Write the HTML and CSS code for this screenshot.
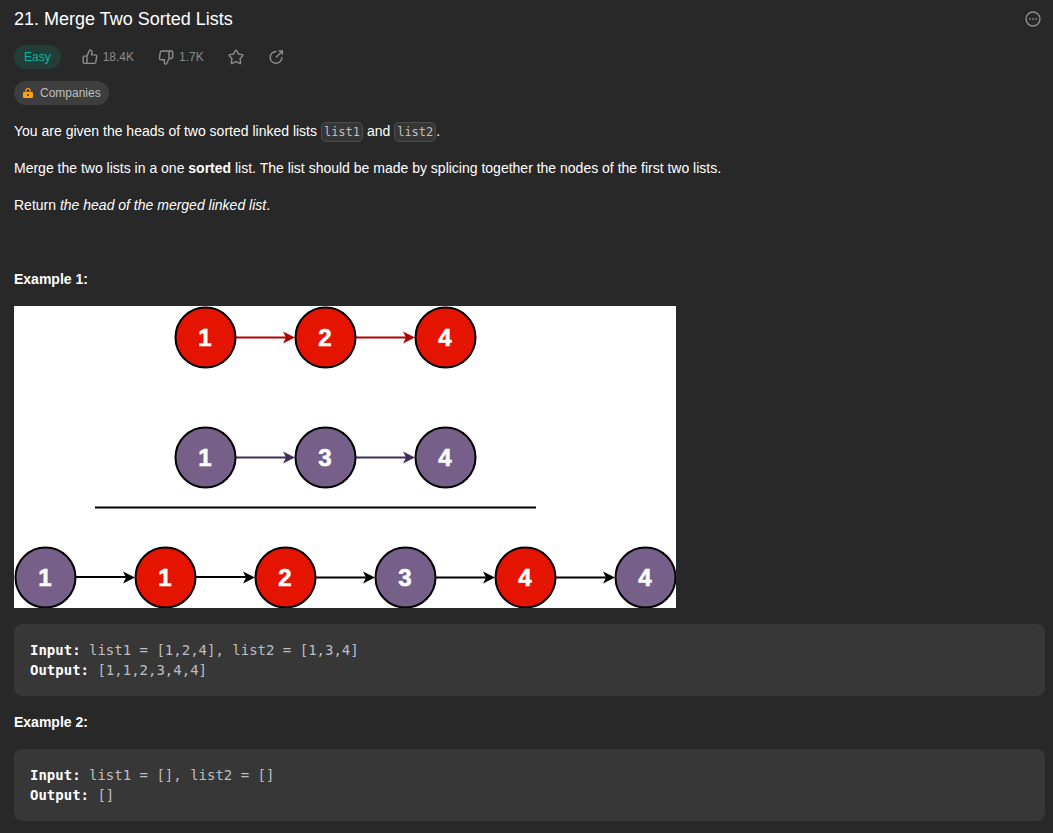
FILE: index.html
```html
<!DOCTYPE html>
<html lang="en">
<head>
<meta charset="utf-8">
<title>Merge Two Sorted Lists</title>
<link rel="stylesheet" href="styles.css">
</head>
<body>
<main class="problem">
  <header class="header">
    <h1 class="title">21. Merge Two Sorted Lists</h1>
    <button class="icon-button" type="button" aria-label="More options">
      <svg class="icon" viewBox="0 0 18 18"><circle cx="9" cy="9" r="7.800"/><path d="M4.500 9h1.800M8.100 9h1.800M11.700 9h1.800"/></svg>
    </button>
  </header>

  <div class="meta">
    <span class="pill pill-easy">Easy</span>
    <div class="actions">
      <button class="icon-button" type="button" aria-label="Like">
        <svg class="icon" viewBox="0 0 18 18"><path d="M5.6 8 8.2 1.9Q8.6 .8 9.8 1.2Q11.4 1.8 11.2 3.6L10.7 6.6H14.6Q16.8 6.6 16.5 8.8L15.5 14.8Q15.2 16.2 13.9 16.2H5.6ZM5.6 8H2.8Q1.3 8 1.3 9.5V14.7Q1.3 16.2 2.8 16.2H5.6"/></svg>
        <span>18.4K</span>
      </button>
      <button class="icon-button" type="button" aria-label="Dislike">
        <svg class="icon" viewBox="0 0 18 18"><path d="M12.4 10.6 9.8 16.3Q9.4 17.3 8.2 16.900Q6.900 16.300 7 14.800L7.300 12H3.600Q1.400 12 1.700 9.800L2.600 3.700Q2.900 2.200 4.300 2.200H12.400ZM12.400 10.600H15Q16.500 10.600 16.500 9.100V3.700Q16.500 2.200 15 2.200H12.400"/></svg>
        <span>1.7K</span>
      </button>
      <button class="icon-button" type="button" aria-label="Add to favorites">
        <svg class="icon" viewBox="0 0 18 18"><path d="M8.100 2Q9 .5 9.900 2L11.800 5.700 15.800 6.300Q17.500 6.700 16.300 8L13.600 10.800 14.200 15Q14.400 16.800 12.800 16L9 14.200 5.200 16Q3.600 16.800 3.800 15L4.400 10.800 1.700 8Q.5 6.700 2.200 6.300L6.200 5.700Z"/></svg>
      </button>
      <button class="icon-button" type="button" aria-label="Share">
        <svg class="icon" viewBox="0 0 18 18"><path d="M9.500 2.900H9A6.600 6.600 0 1 0 15.600 9.500V9M8.900 9.500 16 2.400M12 2.200H16.200V6.400"/></svg>
      </button>
    </div>
  </div>

  <div class="topics">
    <button class="pill pill-companies" type="button">
      <svg class="lock" viewBox="0 0 12 12"><path class="lock-shackle" d="M3.900 5.400V3.600a2.100 2.100 0 0 1 4.200 0V5.400"/><path class="lock-body" fill-rule="evenodd" d="M2.200 5H9.800Q11 5 11 6.200V9.800Q11 11 9.800 11H2.200Q1 11 1 9.800V6.200Q1 5 2.200 5ZM6 7a1 1 0 1 0 0 2 1 1 0 0 0 0-2Z"/></svg>
      <span>Companies</span>
    </button>
  </div>

  <article class="description">
    <p>You are given the heads of two sorted linked lists <code>list1</code> and <code>list2</code>.</p>
    <p>Merge the two lists in a one <strong>sorted</strong> list. The list should be made by splicing together the nodes of the first two lists.</p>
    <p>Return <em>the head of the merged linked list</em>.</p>
    <p>&nbsp;</p>
    <p><strong>Example 1:</strong></p>
    <svg class="diagram" viewBox="0 0 662 302" role="img" aria-label="Two sorted lists merged into one">
      <defs>
        <path id="head" d="M0 0-12-6-9 0-12 6Z"/>
      </defs>
      <rect width="662" height="302" fill="#fff"/>
      <g class="arrow arrow-red">
        <path d="M221 31.500H274M341 31.500H394"/>
        <use href="#head" x="281" y="31.500"/><use href="#head" x="401" y="31.500"/>
      </g>
      <g class="arrow arrow-purple">
        <path d="M221 151.500H274M341 151.500H394"/>
        <use href="#head" x="281" y="151.500"/><use href="#head" x="401" y="151.500"/>
      </g>
      <path class="divider" d="M81 201.500H522"/>
      <g class="arrow arrow-black">
        <path d="M61 271H114M181 271H234" stroke-width="2.200"/>
        <path d="M301 271.500H354M421 271.500H474M541 271.500H594"/>
        <use href="#head" x="121" y="271.500"/><use href="#head" x="241" y="271.500"/><use href="#head" x="361" y="271.500"/><use href="#head" x="481" y="271.500"/><use href="#head" x="601" y="271.500"/>
      </g>
      <g class="node node-red">
        <circle cx="191.500" cy="31.500" r="30"/><circle cx="311.500" cy="31.500" r="30"/><circle cx="431.500" cy="31.500" r="30"/>
        <circle cx="151.500" cy="271.500" r="30"/><circle cx="271.500" cy="271.500" r="30"/><circle cx="511.500" cy="271.500" r="30"/>
      </g>
      <g class="node node-purple">
        <circle cx="191.500" cy="151.500" r="30"/><circle cx="311.500" cy="151.500" r="30"/><circle cx="431.500" cy="151.500" r="30"/>
        <circle cx="31.500" cy="271.500" r="30"/><circle cx="391.500" cy="271.500" r="30"/><circle cx="631.500" cy="271.500" r="30"/>
      </g>
      <g class="value">
        <text x="191" y="40">1</text><text x="311" y="40">2</text><text x="431" y="40">4</text>
        <text x="191" y="160">1</text><text x="311" y="160">3</text><text x="431" y="160">4</text>
        <text x="31" y="280">1</text><text x="151" y="280">1</text><text x="271" y="280">2</text><text x="391" y="280">3</text><text x="511" y="280">4</text><text x="631" y="280">4</text>
      </g>
    </svg>
    <pre><strong>Input:</strong> list1 = [1,2,4], list2 = [1,3,4]
<strong>Output:</strong> [1,1,2,3,4,4]</pre>
    <p><strong>Example 2:</strong></p>
    <pre><strong>Input:</strong> list1 = [], list2 = []
<strong>Output:</strong> []</pre>
  </article>
</main>
</body>
</html>
```
FILE: styles.css
```css
* {
  box-sizing: border-box;
}

body {
  margin: 0;
  background: #282828;
  color: #fff;
  font-family: "Liberation Sans", Arial, sans-serif;
  font-size: 14px;
  line-height: 21px;
}

button {
  border: 0;
  margin: 0;
  padding: 0;
  background: none;
  color: inherit;
  font: inherit;
  cursor: pointer;
}

.problem {
  display: flex;
  flex-direction: column;
  padding: 7px 8px 12px 14px;
}

.header {
  display: flex;
  align-items: center;
  justify-content: space-between;
  padding-right: 4px;
}

.title {
  margin: 0;
  font-size: 18px;
  font-weight: 400;
  line-height: 24px;
}

.meta {
  display: flex;
  align-items: center;
  gap: 21px;
  margin-top: 14px;
}

.actions {
  display: flex;
  align-items: center;
  gap: 24px;
}

.icon-button {
  display: flex;
  align-items: center;
  gap: 5px;
  color: #8c8c8c;
  font-size: 12px;
  line-height: 16px;
}

.icon {
  width: 16px;
  height: 16px;
  fill: none;
  stroke: currentColor;
  stroke-width: 1.6;
  stroke-linejoin: round;
}

.pill {
  display: flex;
  align-items: center;
  height: 24px;
  border-radius: 12px;
  font-size: 12px;
  line-height: 16px;
}

.pill-easy {
  padding: 0 10px;
  background: #233d38;
  color: #00b8a3;
}

.topics {
  display: flex;
  margin-top: 12px;
}

.pill-companies {
  gap: 6px;
  padding: 0 8px;
  background: #3e3e3e;
  color: #bdbec0;
}

.lock {
  width: 12px;
  height: 12px;
}

.lock-shackle {
  fill: none;
  stroke: #ffa116;
  stroke-width: 1.2;
}

.lock-body {
  fill: #ffa116;
}

.description {
  display: flex;
  flex-direction: column;
  gap: 16px;
  margin-top: 16px;
}

.description p {
  margin: 0;
}

.description code {
  padding: 2px;
  border: 1px solid #4d4d4d;
  border-radius: 5px;
  background: #363636;
  color: #bdbec0;
  font-family: "DejaVu Sans Mono", monospace;
  font-size: 12px;
  line-height: 16px;
}

.description pre {
  margin: 0;
  padding: 16px;
  border-radius: 8px;
  background: #373737;
  color: #bdbec0;
  font-family: "DejaVu Sans Mono", monospace;
  font-size: 14px;
  line-height: 20px;
  white-space: pre-wrap;
}

.description pre strong {
  color: #fff;
}

.diagram {
  width: 662px;
  max-width: 100%;
}

.arrow {
  stroke-width: 2;
}

.arrow use {
  stroke: none;
}

.arrow-red {
  fill: #b20000;
  stroke: #b20000;
}

.arrow-purple {
  fill: #432d57;
  stroke: #432d57;
}

.arrow-black {
  fill: #000;
  stroke: #000;
}

.divider {
  stroke: #000;
  stroke-width: 2;
}

.node {
  stroke: #000;
  stroke-width: 2;
}

.node-red {
  fill: #e51400;
}

.node-purple {
  fill: #76608a;
}

.value {
  fill: #fff;
  stroke: #fff;
  stroke-width: 0.6;
  font-size: 24px;
  font-weight: 700;
  text-anchor: middle;
}
```
